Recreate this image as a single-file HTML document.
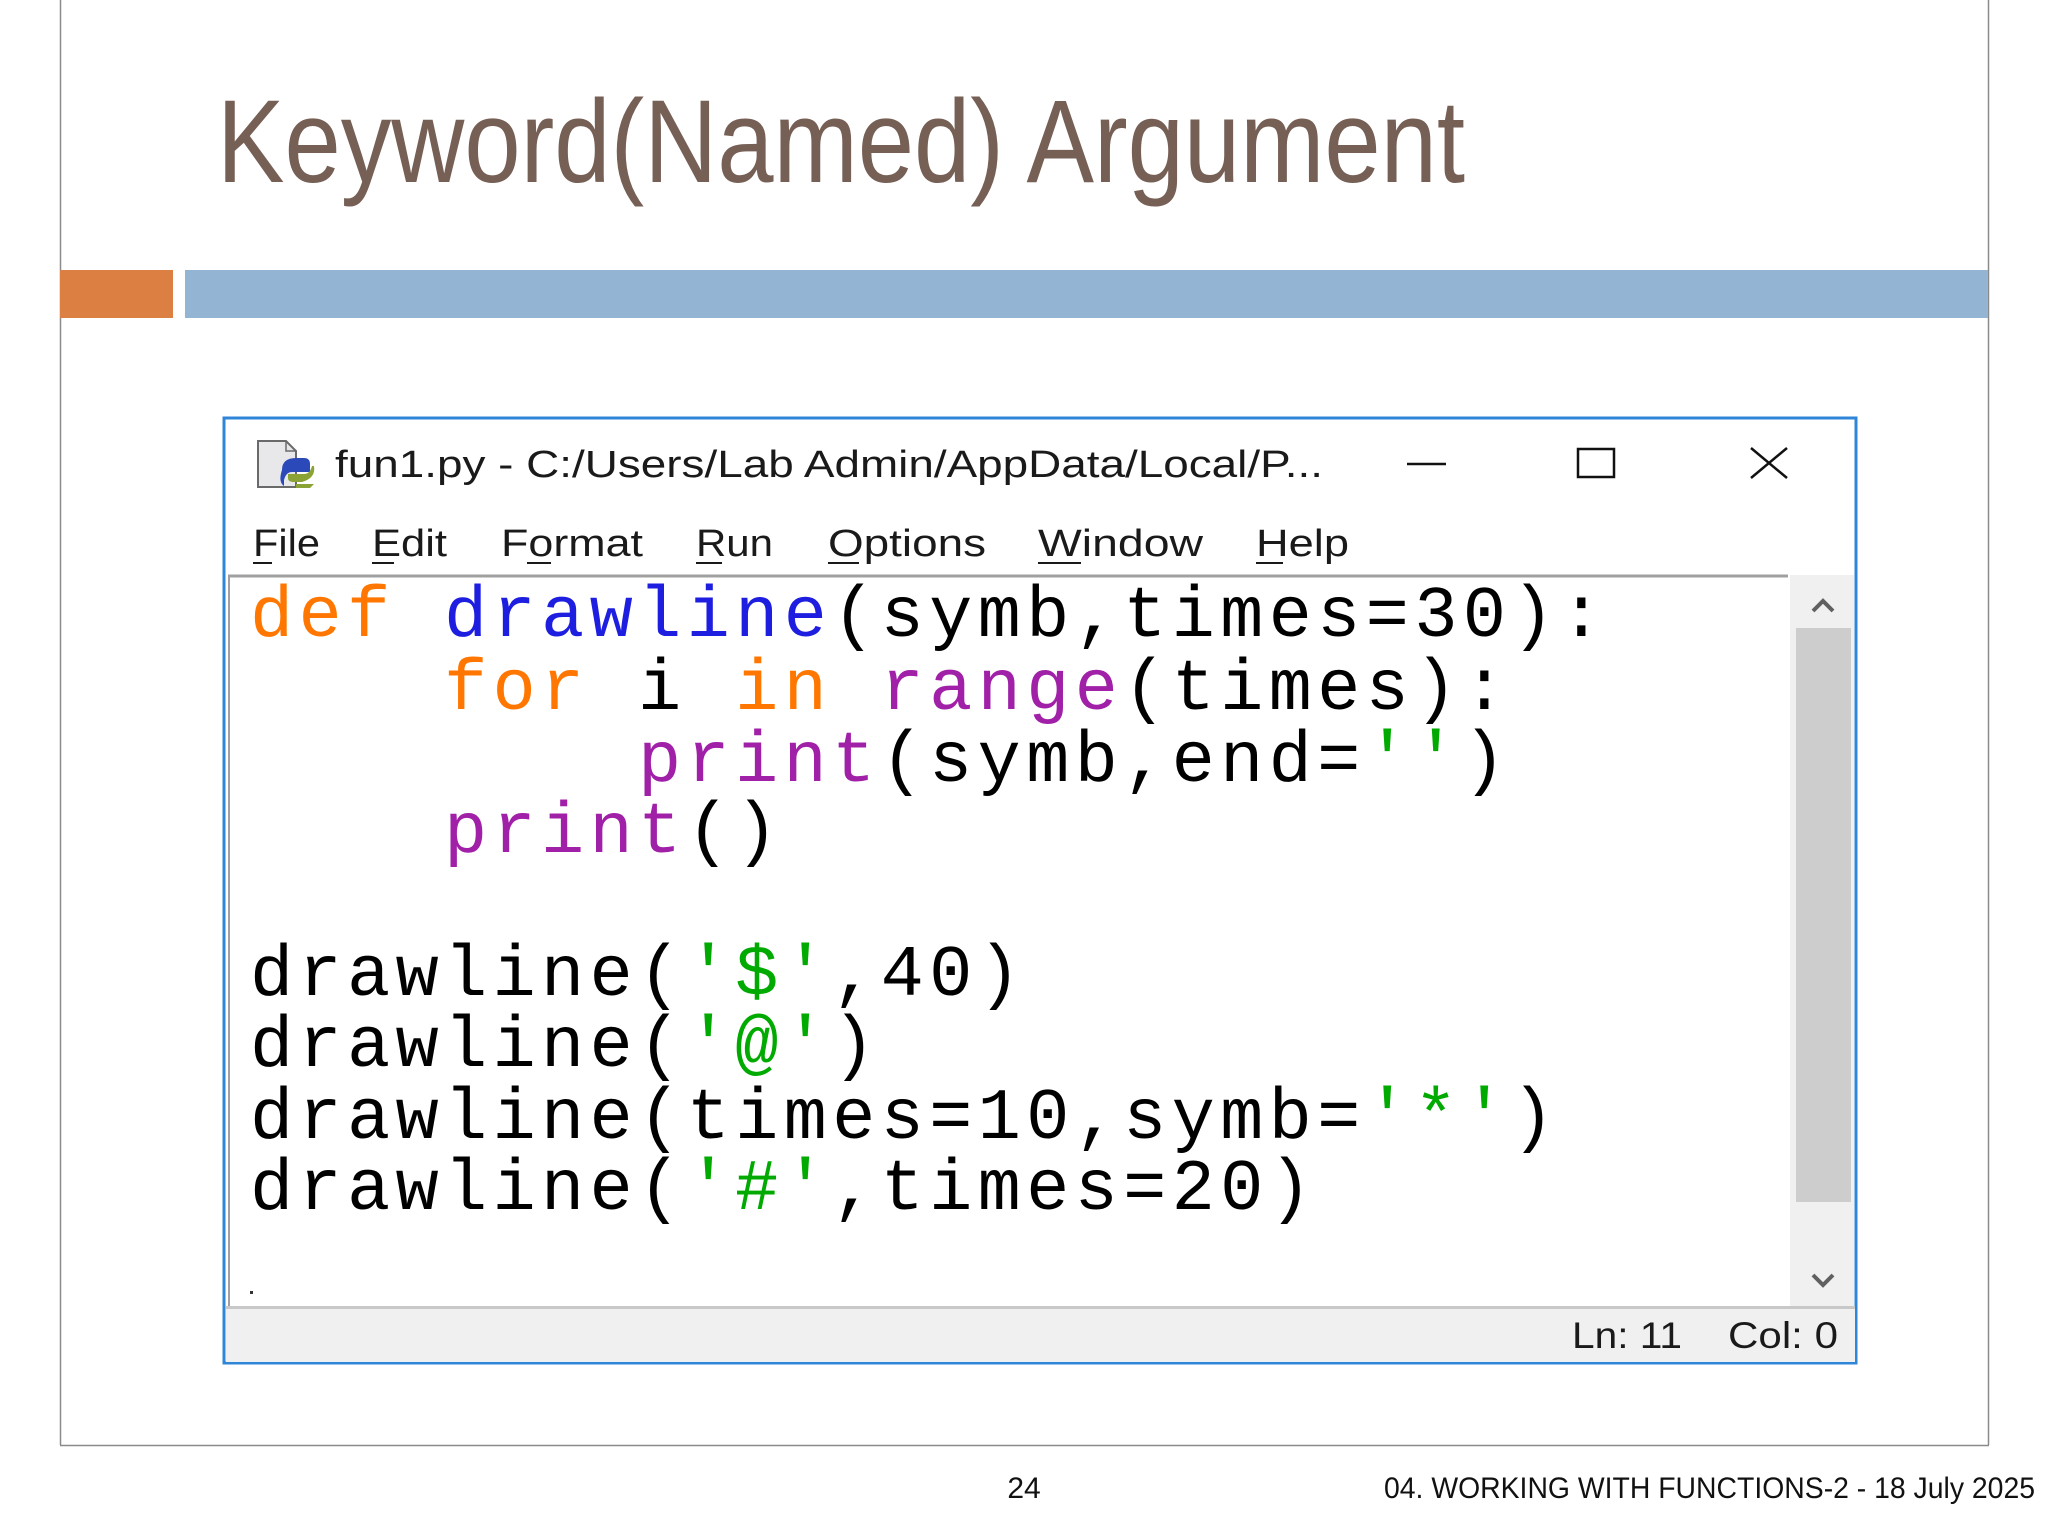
<!DOCTYPE html>
<html><head><meta charset="utf-8"><style>
html,body{margin:0;padding:0;background:#fff;}
svg{display:block;}
.code{font-family:"Liberation Mono",monospace;font-size:72px;}
.ui{font-family:"Liberation Sans",sans-serif;}
</style></head><body>
<svg width="2048" height="1536" viewBox="0 0 2048 1536" xmlns="http://www.w3.org/2000/svg">
<rect width="2048" height="1536" fill="#fff"/>
<line x1="60.5" y1="0" x2="60.5" y2="1445" stroke="#8a8a8a" stroke-width="1.5"/>
<line x1="1988.5" y1="0" x2="1988.5" y2="1445" stroke="#8a8a8a" stroke-width="1.5"/>
<line x1="60" y1="1445.5" x2="1989" y2="1445.5" stroke="#8a8a8a" stroke-width="1.5"/>
<text x="217" y="182" class="ui" font-size="118" fill="#765f55" textLength="1248" lengthAdjust="spacingAndGlyphs">Keyword(Named) Argument</text>
<rect x="60" y="270" width="113" height="48" fill="#dc7f43"/>
<rect x="185" y="270" width="1803" height="48" fill="#93b4d2"/>
<rect x="224" y="418" width="1632" height="945" fill="#fff" stroke="#2f86d8" stroke-width="3"/>
<path d="M258 441 h28 l10 10 v36 h-38 z" fill="#e8e8ea" stroke="#6a6a6a" stroke-width="2"/>
<path d="M286 441 v10 h10" fill="none" stroke="#6a6a6a" stroke-width="1.5"/>
<path d="M282 470 q0 -12 14 -12 h8 q6 0 6 6 v8 h-18 q-6 0 -8 8 v6 q-6 -4 -2 -16z" fill="#2b49b8"/>
<path d="M314 466 q2 12 -12 16 h-8 q-6 0 -6 -4 v-4 h16 q6 0 8 -8z" fill="#8aa334"/>
<path d="M296 484 h18 l-4 4 h-14z" fill="#8aa334"/>
<text x="335" y="477" class="ui" font-size="38" fill="#1a1a1a" textLength="988" lengthAdjust="spacingAndGlyphs">fun1.py - C:/Users/Lab Admin/AppData/Local/P...</text>
<line x1="1407" y1="464" x2="1446" y2="464" stroke="#111" stroke-width="2.5"/>
<rect x="1578" y="449" width="36" height="28" fill="none" stroke="#111" stroke-width="2.5"/>
<path d="M1751 448 L1787 478 M1787 448 L1751 478" stroke="#111" stroke-width="2.5"/>
<g class="ui" font-size="38" fill="#1a1a1a" lengthAdjust="spacingAndGlyphs">
<text x="253" y="556" textLength="67" lengthAdjust="spacingAndGlyphs">File</text>
<text x="372" y="556" textLength="75" lengthAdjust="spacingAndGlyphs">Edit</text>
<text x="501" y="556" textLength="142" lengthAdjust="spacingAndGlyphs">Format</text>
<text x="696" y="556" textLength="77" lengthAdjust="spacingAndGlyphs">Run</text>
<text x="828" y="556" textLength="158" lengthAdjust="spacingAndGlyphs">Options</text>
<text x="1038" y="556" textLength="165" lengthAdjust="spacingAndGlyphs">Window</text>
<text x="1256" y="556" textLength="93" lengthAdjust="spacingAndGlyphs">Help</text>
</g>
<g stroke="#1a1a1a" stroke-width="2">
<line x1="253" y1="563" x2="272" y2="563"/>
<line x1="372" y1="563" x2="394" y2="563"/>
<line x1="527" y1="563" x2="551" y2="563"/>
<line x1="696" y1="563" x2="722" y2="563"/>
<line x1="828" y1="563" x2="859" y2="563"/>
<line x1="1038" y1="563" x2="1081" y2="563"/>
<line x1="1256" y1="563" x2="1283" y2="563"/>
</g>
<rect x="228" y="575" width="1562" height="732" fill="#fff"/>
<line x1="228" y1="576" x2="1788" y2="576" stroke="#a0a0a0" stroke-width="3"/>
<line x1="229" y1="576" x2="229" y2="1306" stroke="#a0a0a0" stroke-width="2"/>
<rect x="1790" y="575" width="64" height="732" fill="#f0f0f0"/>
<rect x="1796" y="628" width="55" height="574" fill="#cdcdcd"/>
<path d="M1813 611 L1823 601 L1833 611" fill="none" stroke="#606060" stroke-width="4"/>
<path d="M1813 1275 L1823 1285 L1833 1275" fill="none" stroke="#606060" stroke-width="4"/>
<rect x="226" y="1307" width="1629" height="55" fill="#f0f0f0"/>
<line x1="226" y1="1307.5" x2="1855" y2="1307.5" stroke="#c8c8c8" stroke-width="3"/>
<text x="1572" y="1348" class="ui" font-size="37" fill="#1a1a1a" textLength="110" lengthAdjust="spacingAndGlyphs">Ln: 11</text>
<text x="1728" y="1348" class="ui" font-size="37" fill="#1a1a1a" textLength="110" lengthAdjust="spacingAndGlyphs">Col: 0</text>
<rect x="250" y="1291" width="3" height="3" fill="#333"/>
<g class="code" fill="#000" letter-spacing="5.3">
<text x="250" y="636"><tspan fill="#ff7700">def</tspan> <tspan fill="#1e1ee0">drawline</tspan>(symb,times=30):</text>
<text x="444" y="709"><tspan fill="#ff7700">for</tspan> i <tspan fill="#ff7700">in</tspan> <tspan fill="#a020a8">range</tspan>(times):</text>
<text x="638" y="781"><tspan fill="#a020a8">print</tspan>(symb,end=<tspan fill="#00aa00">''</tspan>)</text>
<text x="444" y="852"><tspan fill="#a020a8">print</tspan>()</text>
<text x="250" y="995">drawline(<tspan fill="#00aa00">'$'</tspan>,40)</text>
<text x="250" y="1066">drawline(<tspan fill="#00aa00">'@'</tspan>)</text>
<text x="250" y="1138">drawline(times=10,symb=<tspan fill="#00aa00">'*'</tspan>)</text>
<text x="250" y="1209">drawline(<tspan fill="#00aa00">'#'</tspan>,times=20)</text>
</g>
<text x="1024" y="1498" class="ui" font-size="30" fill="#111" text-anchor="middle">24</text>
<text x="1384" y="1498" class="ui" font-size="30" fill="#111" textLength="651" lengthAdjust="spacingAndGlyphs">04. WORKING WITH FUNCTIONS-2 - 18 July 2025</text>
</svg>
</body></html>
